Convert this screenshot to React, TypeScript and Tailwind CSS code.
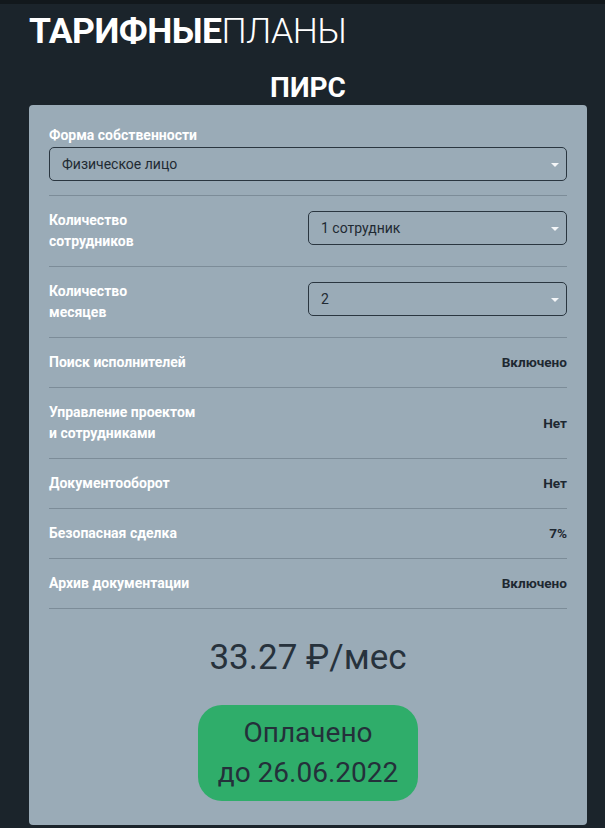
import * as React from "react";

interface SelectBoxProps {
  value: string;
}

function SelectBox({ value }: SelectBoxProps) {
  return (
    <div className="relative flex h-[34px] w-full items-center rounded-[5px] border border-[#2a3640] pl-3 pr-8 text-[14px] text-[#1f2a33]">
      <span>{value}</span>
      <span className="absolute right-[7px] top-[15px] h-0 w-0 border-x-[4px] border-t-[4px] border-x-transparent border-t-[#f4f6f8]" />
    </div>
  );
}

interface RowProps {
  label: React.ReactNode;
  value: string;
}

function SelectRow({ label, value }: RowProps) {
  return (
    <div className="grid grid-cols-2 items-start border-b border-[#7c8c98] py-[14px]">
      <div className="text-[14px] font-bold leading-[21px] text-white">{label}</div>
      <div className="mt-px">
        <SelectBox value={value} />
      </div>
    </div>
  );
}

function InfoRow({ label, value }: RowProps) {
  return (
    <div className="flex items-center justify-between border-b border-[#7c8c98] py-[14px]">
      <div className="text-[14px] font-bold leading-[21px] text-white">{label}</div>
      <div className="text-[13.6px] font-bold text-[#1e2831]">{value}</div>
    </div>
  );
}

export default function App() {
  return (
    <div
      className="min-h-[828px] border-t-4 border-[#12181c] bg-[#1b242b] pl-[29px]"
      style={{ fontFamily: "Roboto, 'Noto Sans', sans-serif" }}
    >
      {/* Header */}
      <h1 className="pt-[3px] text-[35.5px] leading-[48px] tracking-[-0.5px] text-white">
        <span className="font-bold">ТАРИФНЫЕ</span>
        <span className="font-light">ПЛАНЫ</span>
      </h1>

      <div className="w-[558px]">
        <h2 className="pt-[16px] text-center text-[28px] font-bold leading-[34px] text-white">
          ПИРС
        </h2>

        {/* Card */}
        <div className="rounded-[4px] bg-[#9aabb7] px-5 pb-6 pt-[19px]">
          <div className="border-b border-[#7c8c98] pb-[14px]">
            <div className="mb-px text-[14px] font-bold leading-[22px] text-white">
              Форма собственности
            </div>
            <SelectBox value="Физическое лицо" />
          </div>

          <SelectRow
            label={
              <>
                Количество
                <br />
                сотрудников
              </>
            }
            value="1 сотрудник"
          />
          <SelectRow
            label={
              <>
                Количество
                <br />
                месяцев
              </>
            }
            value="2"
          />

          <InfoRow label="Поиск исполнителей" value="Включено" />
          <InfoRow
            label={
              <>
                Управление проектом
                <br />
                и сотрудниками
              </>
            }
            value="Нет"
          />
          <InfoRow label="Документооборот" value="Нет" />
          <InfoRow label="Безопасная сделка" value="7%" />
          <InfoRow label="Архив документации" value="Включено" />

          {/* Price */}
          <div className="mt-[25px] text-center text-[35px] leading-[48px] text-[#27323c]">
            33.27 ₽/мес
          </div>

          <div className="mt-[23px] flex justify-center">
            <div className="rounded-[24px] bg-[#2fad6a] px-5 py-2 text-center text-[28px] leading-[40px] text-[#24303a]">
              Оплачено
              <br />
              до 26.06.2022
            </div>
          </div>
        </div>
      </div>
    </div>
  );
}
